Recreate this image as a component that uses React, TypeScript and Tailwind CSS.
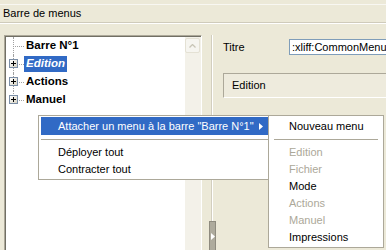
import React from 'react';

const treeItems = [
  { label: 'Barre N°1', expandable: false, selected: false },
  { label: 'Edition', expandable: true, selected: true },
  { label: 'Actions', expandable: true, selected: false },
  { label: 'Manuel', expandable: true, selected: false },
];

const subItems = [
  { label: 'Edition', enabled: false },
  { label: 'Fichier', enabled: false },
  { label: 'Mode', enabled: true },
  { label: 'Actions', enabled: false },
  { label: 'Manuel', enabled: false },
  { label: 'Impressions', enabled: true },
];

function PlusBox() {
  return (
    <div className="absolute left-[3px] top-[4px] w-[9px] h-[9px] border border-[#7b8ea6] bg-gradient-to-br from-white to-[#d8d4c4] flex items-center justify-center">
      <svg width="5" height="5" viewBox="0 0 5 5">
        <rect x="0" y="2" width="5" height="1" fill="#000" />
        <rect x="2" y="0" width="1" height="5" fill="#000" />
      </svg>
    </div>
  );
}

export default function App() {
  return (
    <div className="relative w-[386px] h-[250px] overflow-hidden bg-[#ece9d8] text-black text-[11px] font-['Liberation_Sans',Arial,sans-serif]">
      {/* Header */}
      <div className="h-[4px]" />
      <div className="h-[19px] border-t border-t-[#f8f7f2] border-b border-b-[#cfcbbb] flex items-center pl-[3px] leading-none">
        Barre de menus
      </div>
      <div className="h-[1px] bg-white" />
      <div className="h-[11px]" />

      <div className="flex h-[215px]">
        {/* Tree panel */}
        <div className="shrink-0 ml-[4px] w-[198px] border-l border-t border-l-[#aca899] border-t-[#aca899] border-r border-r-white">
          <div className="h-full border-l border-t border-l-[#716f64] border-t-[#716f64] bg-white flex">
            <div className="flex-1 flex flex-col">
              {treeItems.map((item, i) => (
                <div key={item.label} className="relative h-[18px] flex items-center">
                  <div className="relative w-[18px] h-full">
                    <div
                      className={`absolute left-[7px] top-0 border-l border-dotted border-[#a0a0a0] ${
                        i === treeItems.length - 1 ? 'h-[9px]' : 'h-full'
                      }`}
                    />
                    <div className="absolute left-[9px] top-[9px] w-[9px] border-t border-dotted border-[#a0a0a0]" />
                    {item.expandable && <PlusBox />}
                  </div>
                  <span
                    className={`h-[16px] px-[2px] flex items-center font-bold text-[11.5px] leading-none ${
                      item.selected ? 'bg-[#316ac5] text-white italic' : ''
                    }`}
                  >
                    {item.label}
                  </span>
                </div>
              ))}
            </div>
            {/* Scrollbar */}
            <div className="w-[16px] bg-[#f3f1e9] pt-[1px]">
              <div className="w-[15px] h-[15px] rounded-[2px] border border-[#e4e1d4] bg-[#f6f5f0] flex items-center justify-center">
                <svg width="7" height="4" viewBox="0 0 7 4">
                  <path d="M0.5 3.5 L3.5 0.5 L6.5 3.5" stroke="#c8c5b6" strokeWidth="1.3" fill="none" />
                </svg>
              </div>
            </div>
          </div>
        </div>

        {/* Splitter */}
        <div className="shrink-0 relative w-[11px] border-r border-r-white shadow-[inset_-1px_0_0_#d2cebf]">
          <div className="absolute left-[7px] top-[186px] w-[7px] h-[30px] bg-[#aeab9d] border border-[#8e8b7f] flex items-center justify-center">
            <svg width="4" height="7" viewBox="0 0 4 7">
              <path d="M0 0 L4 3.5 L0 7 Z" fill="#fff" />
            </svg>
          </div>
        </div>

        {/* Properties */}
        <div className="flex-1 min-w-0 overflow-hidden flex flex-col pt-[4px]">
          <div className="flex items-center h-[16px]">
            <div className="shrink-0 w-[76px] pl-[10px]">Titre</div>
            <div className="shrink-0 w-[120px] h-[16px] border border-[#7f9db9] bg-white pl-[2px] flex items-center whitespace-nowrap overflow-hidden leading-none">
              :xliff:CommonMenuBar
            </div>
          </div>
          <div className="mt-[18px] ml-[10px] h-[25px] border-l border-t border-[#aca899] border-b border-b-white bg-[#eeebdd] flex items-center pl-[8px]">
            Edition
          </div>
        </div>
      </div>

      {/* Context menu */}
      <div className="absolute left-[38px] top-[115px] w-[232px] border border-[#aca899] bg-white pl-[2px] py-[1px]">
        <div className="h-[18px] bg-[#316ac5] text-white flex items-center pl-[17px] pr-[6px] justify-between">
          <span>Attacher un menu à la barre "Barre N°1"</span>
          <svg width="4" height="7" viewBox="0 0 4 7">
            <path d="M0 0 L4 3.5 L0 7 Z" fill="#fff" />
          </svg>
        </div>
        <div className="h-[9px] flex items-center">
          <div className="w-full h-[1px] bg-[#aca899]" />
        </div>
        <div className="h-[17px] flex items-center pl-[17px]">Déployer tout</div>
        <div className="h-[17px] flex items-center pl-[17px]">Contracter tout</div>
      </div>

      {/* Submenu */}
      <div className="absolute left-[268px] top-[115px] w-[116px] border border-[#aca899] bg-white px-[2px] py-[1px]">
        <div className="h-[18px] flex items-center pl-[18px]">Nouveau menu</div>
        <div className="h-[9px] flex items-center px-[3px]">
          <div className="w-full h-[1px] bg-[#aca899]" />
        </div>
        {subItems.map((s) => (
          <div
            key={s.label}
            className={`h-[17px] flex items-center pl-[18px] ${s.enabled ? 'text-black' : 'text-[#aca899]'}`}
          >
            {s.label}
          </div>
        ))}
      </div>
    </div>
  );
}
